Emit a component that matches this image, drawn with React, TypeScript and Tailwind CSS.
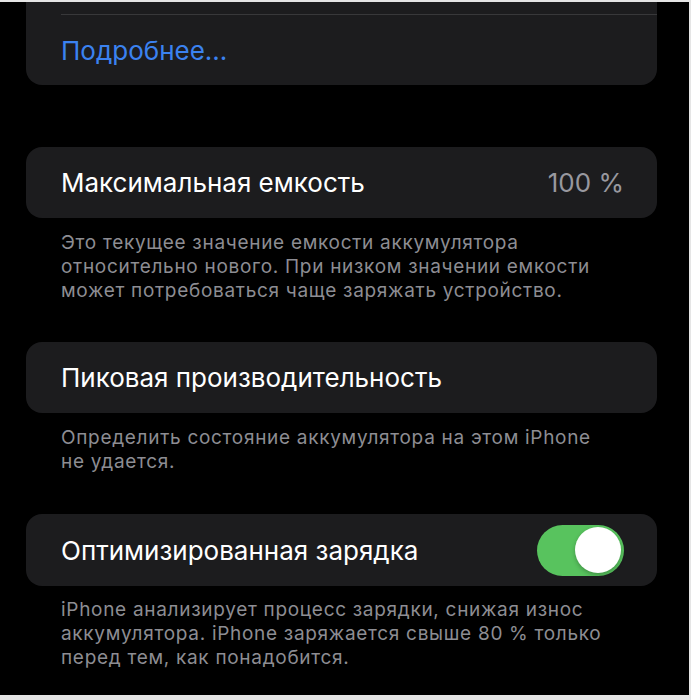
import React from "react";

const font = { fontFamily: "Inter, 'Noto Sans', sans-serif" };

function Footer({ children }: { children: React.ReactNode }) {
  return (
    <div className="pl-[61px] pr-[20px] text-[19px] leading-[24px] tracking-[0.7px] text-[#8d8d93] whitespace-nowrap">
      {children}
    </div>
  );
}

export default function App() {
  return (
    <div className="w-[691px] h-[700px] bg-[#e5e5e5] pt-[2px] pr-[2px] pb-[5px] overflow-hidden" style={font}>
      <div className="h-full bg-black flex flex-col">
        {/* Card 1 (cut off at top) */}
        <div className="mx-[26px] w-[631px] bg-[#1c1c1e] rounded-b-[16px] pt-[12px]">
          <div className="ml-[35px] h-px bg-[#38383a]" />
          <div className="h-[70px] flex items-center pl-[35px] text-[26px] text-[#3b82f0]">
            Подробнее...
          </div>
        </div>

        {/* Card 2 */}
        <div className="mt-[62px] mx-[26px] w-[631px] h-[71px] bg-[#1c1c1e] rounded-[16px] flex items-center justify-between pl-[35px] pr-[33px]">
          <span className="text-[26px] text-white">Максимальная емкость</span>
          <span className="text-[26px] text-[#98989f]">100 %</span>
        </div>
        <div className="pt-[13px]">
          <Footer>
            Это текущее значение емкости аккумулятора
            <br />
            относительно нового. При низком значении емкости
            <br />
            может потребоваться чаще заряжать устройство.
          </Footer>
        </div>

        {/* Card 3 */}
        <div className="mt-[39px] mx-[26px] w-[631px] h-[71px] bg-[#1c1c1e] rounded-[16px] flex items-center pl-[35px]">
          <span className="text-[26px] text-white">Пиковая производительность</span>
        </div>
        <div className="pt-[13px]">
          <Footer>
            Определить состояние аккумулятора на этом iPhone
            <br />
            не удается.
          </Footer>
        </div>

        {/* Card 4 */}
        <div className="mt-[40px] mx-[26px] w-[631px] h-[72px] bg-[#1c1c1e] rounded-[16px] flex items-center justify-between pl-[35px] pr-[33px]">
          <span className="text-[26px] text-white">Оптимизированная зарядка</span>
          <div className="w-[87px] h-[51px] rounded-full bg-[#58c35e] flex items-center justify-end pr-[3px]">
            <div className="w-[46px] h-[46px] rounded-full bg-white shadow-[0_2px_4px_rgba(0,0,0,0.25)]" />
          </div>
        </div>
        <div className="pt-[12px]">
          <Footer>
            iPhone анализирует процесс зарядки, снижая износ
            <br />
            аккумулятора. iPhone заряжается свыше 80 % только
            <br />
            перед тем, как понадобится.
          </Footer>
        </div>
      </div>
    </div>
  );
}
